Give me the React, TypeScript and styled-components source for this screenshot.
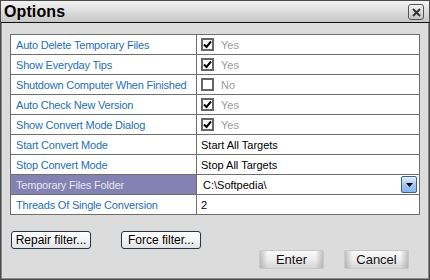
import { FC, Fragment } from "react"
import styled, { createGlobalStyle } from "styled-components"

const GlobalStyle = createGlobalStyle`
  html, body {
    margin: 0;
    padding: 0;
    background: #dcdcdc;
  }
  * {
    box-sizing: border-box;
  }
`

const Window = styled.div`
  width: 430px;
  height: 280px;
  display: flex;
  flex-direction: column;
  background: #dcdcdc;
  border: 1px solid #4a4a4a;
  box-shadow: inset 1px 0 0 #8a8a8a, inset -1px 0 0 #8a8a8a, inset 0 -1px 0 #8a8a8a;
  font-family: "Liberation Sans", Arial, sans-serif;
`

const TitleBar = styled.div`
  height: 22px;
  flex: none;
  display: flex;
  align-items: center;
  justify-content: space-between;
  padding: 0 5px 0 3px;
  background: linear-gradient(#f2f2f2, #e0e0e0 45%, #c6c6c6);
  border-bottom: 1px solid #111;
`

const Title = styled.div`
  font-size: 16px;
  font-weight: bold;
  color: #000;
  letter-spacing: 0.1px;
`

const CloseButton = styled.div`
  width: 16px;
  height: 16px;
  margin-top: 1px;
  border: 1px solid #555;
  border-radius: 3px;
  background: linear-gradient(#f4f4f4, #c4c4c4);
  display: flex;
  align-items: center;
  justify-content: center;
`

const Body = styled.div`
  flex: 1;
  display: flex;
  flex-direction: column;
  padding: 11px 10px 0 9px;
`

const Table = styled.div`
  width: 410px;
  display: grid;
  grid-template-columns: 186px 1fr;
  grid-auto-rows: 20px;
  border-top: 1px solid #6e6e6e;
  border-left: 1px solid #6e6e6e;
`

const LabelCell = styled.div<{ $selected?: boolean }>`
  display: flex;
  align-items: center;
  padding-left: 5px;
  font-size: 11px;
  letter-spacing: -0.2px;
  color: ${({ $selected }) => ($selected ? "#e6e6f2" : "#1f6fb4")};
  background: ${({ $selected }) => ($selected ? "#8481b3" : "#fff")};
  border-right: 1px solid #6e6e6e;
  border-bottom: 1px solid #6e6e6e;
  white-space: nowrap;
  overflow: hidden;
`

const ValueCell = styled.div`
  display: flex;
  align-items: center;
  padding-left: 4px;
  padding-right: 2px;
  font-size: 11px;
  color: #000;
  background: #fff;
  border-right: 1px solid #6e6e6e;
  border-bottom: 1px solid #6e6e6e;
  white-space: nowrap;
`

const Check = styled.div`
  width: 13px;
  height: 13px;
  border: 2px solid #666;
  background: #fff;
  display: flex;
  align-items: center;
  justify-content: center;
  margin-right: 7px;
`

const CheckText = styled.span`
  color: #9a9a9a;
`

const FolderText = styled.span`
  flex: 1;
  padding-left: 2px;
`

const DropButton = styled.div`
  width: 16px;
  height: 17px;
  border: 1px solid #3f5f8c;
  border-radius: 2px;
  background: linear-gradient(#e2effd, #9fc6f2 55%, #86b5ec);
  display: flex;
  align-items: center;
  justify-content: center;
`

const FilterRow = styled.div`
  display: flex;
  gap: 30px;
  margin-top: 16px;
  padding-left: 1px;
`

const FilterButton = styled.div`
  width: 80px;
  height: 18px;
  display: flex;
  align-items: center;
  justify-content: center;
  border: 1px solid #25344a;
  border-radius: 3px;
  background: linear-gradient(#ffffff, #f4f4f4 50%, #e2e2e2);
  font-size: 12px;
  color: #000;
`

const ActionRow = styled.div`
  display: flex;
  justify-content: flex-end;
  gap: 20px;
  margin-top: 1px;
  padding-right: 10px;
`

const ActionButton = styled.div`
  width: 65px;
  height: 19px;
  display: flex;
  align-items: center;
  justify-content: center;
  border: 1px solid #c8c8c8;
  border-radius: 2px;
  background:
    linear-gradient(90deg, rgba(150, 150, 150, 0.55), rgba(255, 255, 255, 0) 12%, rgba(255, 255, 255, 0) 88%, rgba(150, 150, 150, 0.55)),
    linear-gradient(#fafafa, #eeeeee 50%, #d6d6d6);
  font-size: 13px;
  color: #111;
`

const CheckMark: FC = () => (
  <svg width="9" height="9" viewBox="0 0 9 9">
    <path d="M1 4.5 L3.5 7 L8 1.5" stroke="#000" strokeWidth="2" fill="none" />
  </svg>
)

const CheckValue: FC<{ checked: boolean }> = ({ checked }) => (
  <>
    <Check>{checked && <CheckMark />}</Check>
    <CheckText>{checked ? "Yes" : "No"}</CheckText>
  </>
)

const options = [
  { label: "Auto Delete Temporary Files", checked: true },
  { label: "Show Everyday Tips", checked: true },
  { label: "Shutdown Computer When Finished", checked: false },
  { label: "Auto Check New Version", checked: true },
  { label: "Show Convert Mode Dialog", checked: true },
]

export default function App() {
  return (
    <>
      <GlobalStyle />
      <Window>
        <TitleBar>
          <Title>Options</Title>
          <CloseButton>
            <svg width="9" height="9" viewBox="0 0 9 9">
              <path d="M1 1 L8 8 M8 1 L1 8" stroke="#333" strokeWidth="2" />
            </svg>
          </CloseButton>
        </TitleBar>
        <Body>
          <Table>
            {options.map((o) => (
              <Fragment key={o.label}>
                <LabelCell>{o.label}</LabelCell>
                <ValueCell>
                  <CheckValue checked={o.checked} />
                </ValueCell>
              </Fragment>
            ))}
            <LabelCell>Start Convert Mode</LabelCell>
            <ValueCell>Start All Targets</ValueCell>
            <LabelCell>Stop Convert Mode</LabelCell>
            <ValueCell>Stop All Targets</ValueCell>
            <LabelCell $selected>Temporary Files Folder</LabelCell>
            <ValueCell>
              <FolderText>C:\Softpedia\</FolderText>
              <DropButton>
                <svg width="7" height="4" viewBox="0 0 7 4">
                  <path d="M0 0 H7 L3.5 4 Z" fill="#000" />
                </svg>
              </DropButton>
            </ValueCell>
            <LabelCell>Threads Of Single Conversion</LabelCell>
            <ValueCell>2</ValueCell>
          </Table>
          <FilterRow>
            <FilterButton>Repair filter...</FilterButton>
            <FilterButton>Force filter...</FilterButton>
          </FilterRow>
          <ActionRow>
            <ActionButton>Enter</ActionButton>
            <ActionButton>Cancel</ActionButton>
          </ActionRow>
        </Body>
      </Window>
    </>
  )
}
